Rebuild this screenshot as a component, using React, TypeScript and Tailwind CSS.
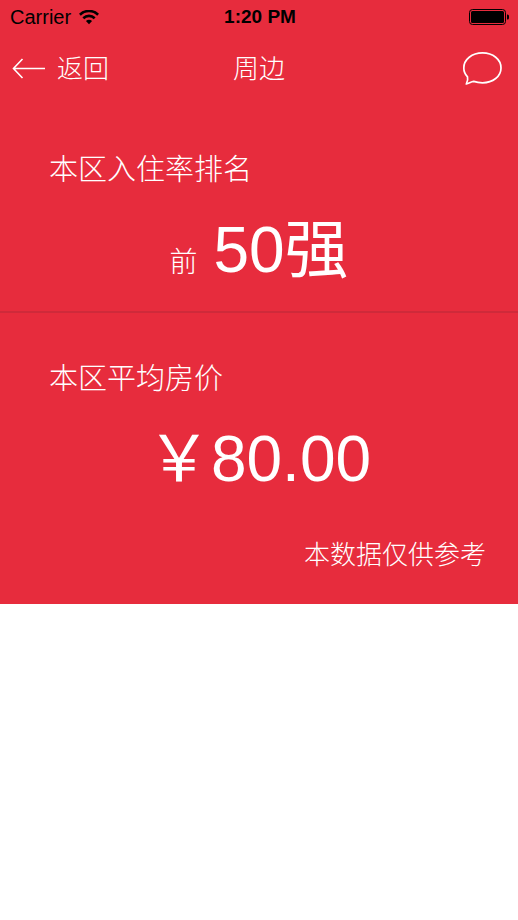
import React from "react";

function StatusBar() {
  return (
    <div className="grid h-[34px] grid-cols-3 items-center pl-[10px] pr-2 text-black">
      <div className="flex items-center gap-2 text-[20px] leading-6">
        <span>Carrier</span>
        <svg width="20" height="15" viewBox="0 0 20 15" fill="none" stroke="currentColor" strokeWidth="2.6" aria-hidden="true">
          <path d="M.9 4.700a13 13 0 0 1 18.200 0" />
          <path d="M4.300 8.200a8.200 8.200 0 0 1 11.400 0" />
          <path d="M10 14.200 6.900 11.100a4.600 4.600 0 0 1 6.200 0Z" fill="currentColor" stroke="none" />
        </svg>
      </div>
      <div className="text-center text-[19px] font-bold leading-6">1:20 PM</div>
      <svg className="justify-self-end" width="41" height="16" viewBox="0 0 41 16" aria-hidden="true">
        <rect x="0.5" y="0.5" width="36" height="15" rx="3" fill="none" stroke="currentColor" />
        <rect x="2" y="2" width="33" height="12" rx="1.5" fill="currentColor" />
        <path d="M38 5.500h.5a1.500 1.500 0 0 1 1.500 1.500v2a1.500 1.500 0 0 1-1.500 1.500H38Z" fill="currentColor" />
      </svg>
    </div>
  );
}

function NavBar() {
  return (
    <header className="grid h-[70px] grid-cols-3 items-center px-3">
      <button type="button" className="flex items-center gap-3 justify-self-start text-[26px] font-light leading-8">
        <svg width="33" height="22" viewBox="0 0 33 22" fill="none" stroke="currentColor" strokeWidth="1.600" aria-hidden="true">
          <path d="M33 10.500H1.500M10.500 1 1.500 10.500 10.500 20" />
        </svg>
        返回
      </button>
      <h1 className="text-center text-[26px] font-light leading-8">周边</h1>
      <button type="button" aria-label="消息" className="justify-self-end pr-1">
        <svg width="40" height="34" viewBox="0 1 40 34" fill="none" stroke="currentColor" strokeWidth="1.700" strokeLinejoin="round" aria-hidden="true">
          <path d="M20.500 1.900C10 1.900 1.800 8.400 1.800 16.900c0 3.600 1.400 6.500 3.700 8.900.6 2.200 0 4.700-1.200 7.200 3-.9 5-2.400 7.400-2.600 2.700.9 5.700 1.400 8.800 1.400C31 31.800 39 25.300 39 16.900S31 1.900 20.500 1.900Z" />
        </svg>
      </button>
    </header>
  );
}

export default function App() {
  return (
    <div className="min-h-screen bg-white font-['Liberation_Sans','Noto_Sans_CJK_SC',sans-serif] text-white">
      <div className="bg-[#e72c3d]">
        <StatusBar />
        <NavBar />
        <main>
          <section className="border-b-2 border-[#cf2a3a] pb-[21px] pt-[50px]">
            <h2 className="px-[49px] text-[29px] font-light leading-8">本区入住率排名</h2>
            <p className="mt-6 flex items-baseline justify-center gap-4">
              <span className="text-[28px] font-light">前</span>
              <span className="text-[64px] leading-20">50强</span>
            </p>
          </section>
          <section className="pb-[33px] pt-[50px]">
            <h2 className="px-[49px] text-[29px] font-light leading-8">本区平均房价</h2>
            <p className="mt-6 text-center text-[64px] leading-20">{"\uFFE5"}80.00</p>
            <p className="mt-10 px-8 text-right text-[26px] font-light leading-8">本数据仅供参考</p>
          </section>
        </main>
      </div>
    </div>
  );
}
